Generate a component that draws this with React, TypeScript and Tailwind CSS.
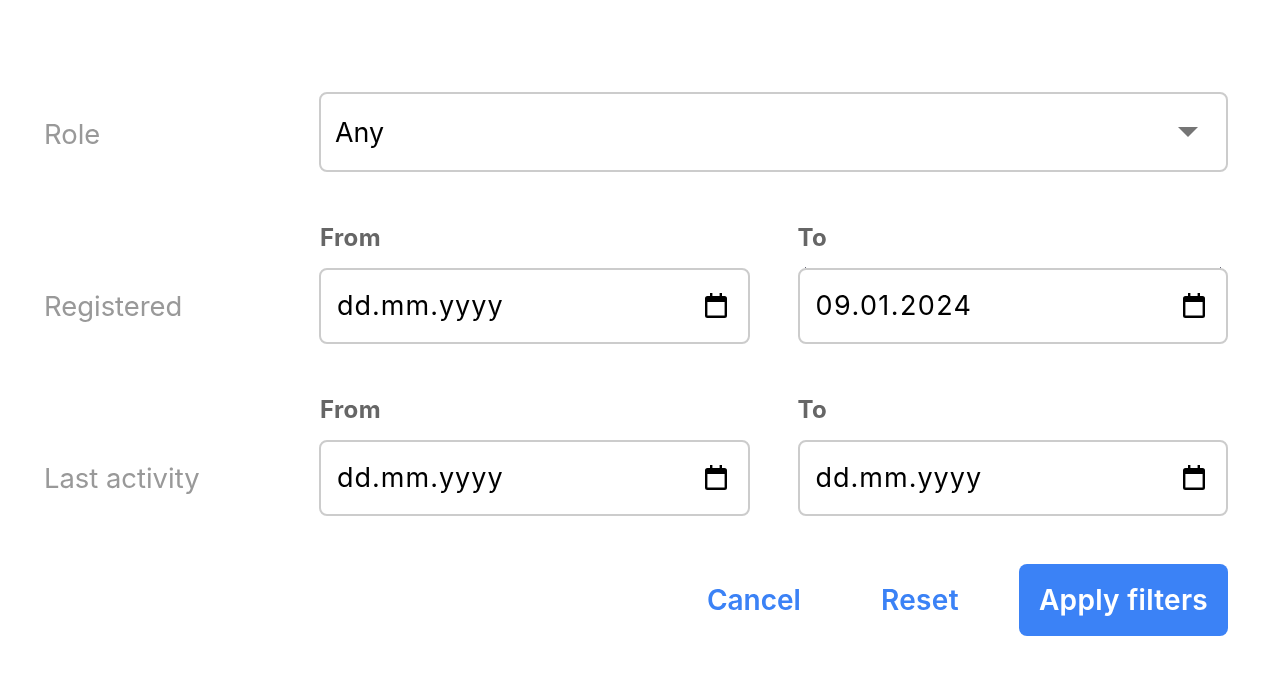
import React from "react";

function Cal() {
  return (
    <svg width="22" height="25" viewBox="0 0 22 25" className="shrink-0 mb-[2px]">
      <path fill="#000" fillRule="evenodd" d="M5 0h2.4v3h7.2V0H17v3h2.5A2.5 2.5 0 0 1 22 5.5v17a2.5 2.5 0 0 1-2.5 2.5h-17A2.5 2.5 0 0 1 0 22.5v-17A2.5 2.5 0 0 1 2.5 3H5V0ZM2.4 9v13.6h17.2V9H2.4Z" />
    </svg>
  );
}

function DateBox({ label, value, filled }: { label: string; value: string; filled?: boolean }) {
  return (
    <div className="flex flex-col flex-1 min-w-0">
      <div className={filled || label === "To" ? "text-[24px] leading-[28px] font-bold text-[#666666] h-[44px] tracking-[0.4px]" : "text-[24px] leading-[28px] font-bold text-[#666666] h-[44px] tracking-[0.4px] pl-px"}>{label}</div>
      <div className="relative h-[76px] border-2 border-[#cccccc] rounded-lg bg-white flex items-center justify-between pl-[16px] pr-[21px]">
        <span className={filled ? "text-[27px] tracking-[1.4px] text-black pt-px" : "text-[27px] tracking-[1px] text-black pt-px"}>{value}</span>
        <Cal />
        {filled && (
          <>
            <span className="absolute left-[5px] top-[-3px] w-px h-px bg-[#667]" />
            <span className="absolute right-[5px] top-[-3px] w-px h-px bg-[#667]" />
          </>
        )}
      </div>
    </div>
  );
}

function Row({ label, children }: { label: string; children: React.ReactNode }) {
  return (
    <div className="flex items-end">
      <div className="w-[275px] text-[27.4px] leading-[76px] h-[76px] text-[#999999] shrink-0">{label}</div>
      <div className="flex-1 flex gap-[48px]">{children}</div>
    </div>
  );
}

export default function App() {
  return (
    <div className="w-[1274px] h-[674px] bg-white overflow-hidden pl-[44px] pr-[46px] pt-[92px] font-['Inter',sans-serif]">
      <div className="flex flex-col [will-change:transform]">
        <div className="flex items-center h-[80px]">
          <div className="w-[275px] text-[27.4px] text-[#999999] shrink-0 pt-[6px]">Role</div>
          <div className="flex-1 h-[80px] border-2 border-[#cccccc] rounded-lg flex items-center justify-between pl-[14px] pr-[28px]">
            <span className="text-[26.8px] text-black">Any</span>
            <svg width="20" height="10" viewBox="0 0 20 10"><path d="M0 0h20L10 10Z" fill="#757575" /></svg>
          </div>
        </div>
        <div className="mt-[52px]">
          <Row label="Registered">
            <DateBox label="From" value="dd.mm.yyyy" />
            <DateBox label="To" value="09.01.2024" filled />
          </Row>
        </div>
        <div className="mt-[52px]">
          <Row label="Last activity">
            <DateBox label="From" value="dd.mm.yyyy" />
            <DateBox label="To" value="dd.mm.yyyy" />
          </Row>
        </div>
        <div className="mt-[48px] flex justify-end items-center">
          <button className="text-[28px] font-semibold text-[#3b82f6] mr-[80px]">Cancel</button>
          <button className="text-[28px] font-semibold text-[#3b82f6] mr-[60px] tracking-[0.35px]">Reset</button>
          <button className="h-[72px] w-[209px] rounded-lg bg-[#3b82f6] text-white text-[28px] font-semibold tracking-[0.3px]">Apply filters</button>
        </div>
      </div>
    </div>
  );
}
